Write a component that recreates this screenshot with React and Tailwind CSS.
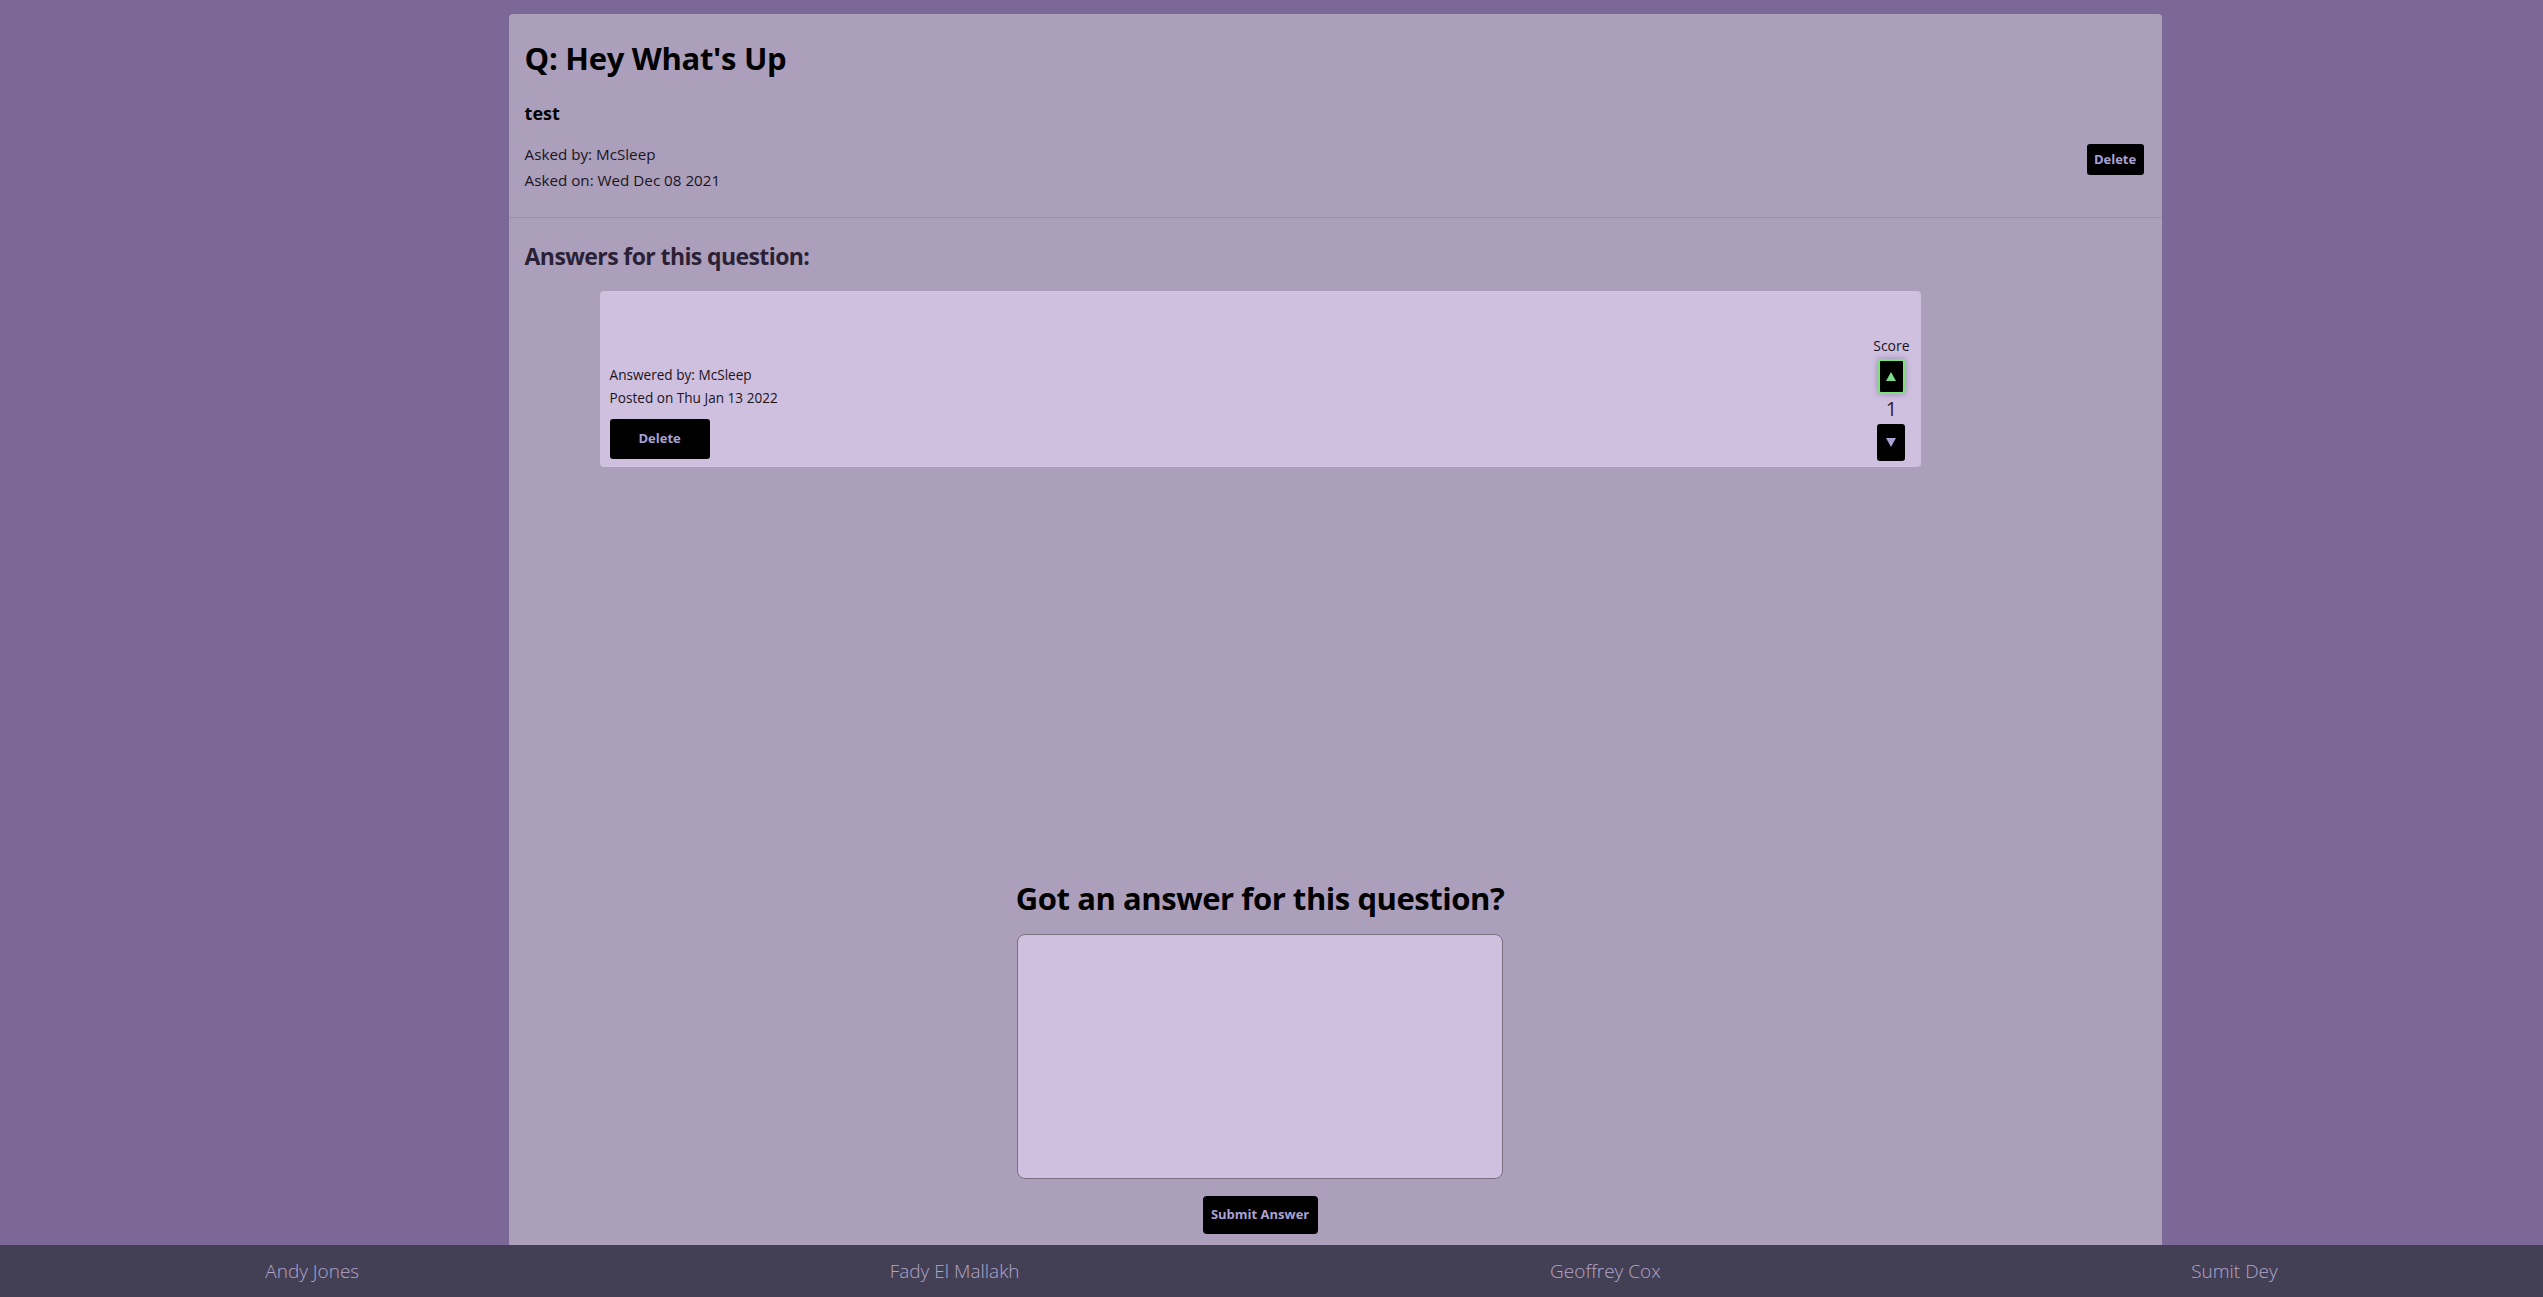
import React from "react";

export default function App() {
  const font = { fontFamily: '"Open Sans", "Noto Sans", sans-serif' };
  return (
    <div className="relative h-[1297px] w-full overflow-hidden bg-[#7b6896] pt-[14px]" style={font}>
      <div className="ml-[20%] h-[1300px] w-[65%] rounded-t-[4px] bg-[#ac9fbb]">
        {/* Question header */}
        <div className="px-4 pt-[25px] pb-[24px]">
          <h1 className="text-[31px] font-bold leading-[38px] tracking-[-0.3px] text-black">Q: Hey What's Up</h1>
          <p className="mt-[25px] text-[18px] font-bold leading-[22px] text-black">test</p>
          <div className="mt-[17px] flex items-start justify-between">
            <div className="text-[15.2px] leading-[26px] text-[#1a1420]">
              <div>Asked by: McSleep</div>
              <div>Asked on: Wed Dec 08 2021</div>
            </div>
            <button className="mt-[3px] mr-[2px] h-[31px] w-[57px] rounded-[3px] bg-black text-[13px] font-bold text-[#a9a2d4]">
              Delete
            </button>
          </div>
        </div>
        <div className="h-px bg-[#999099]" />
        <div className="px-4 pt-[23px]">
          <h2 className="text-[23px] font-bold leading-[30px] tracking-[-0.6px] text-[#2b2137]">Answers for this question:</h2>
        </div>

        <div className="ml-[91px] w-[1321px]">
          {/* Answer card */}
          <div className="mt-[20px] flex h-[176px] items-end justify-between rounded-[4px] bg-[#cfc0e0] pr-[11px] pb-[6px] pl-[10px]">
            <div className="pb-[2px]">
              <div className="text-[13.6px] leading-[23px] text-[#1a1420]">Answered by: McSleep</div>
              <div className="text-[13.6px] leading-[23px] text-[#1a1420]">Posted on Thu Jan 13 2022</div>
              <button className="mt-[10px] h-[40px] w-[100px] rounded-[3px] bg-black text-[13px] font-bold text-[#a9a2d4]">
                Delete
              </button>
            </div>
            <div className="flex flex-col items-center">
              <div className="text-[14px] leading-[18px] text-[#1a1420]">Score</div>
              <button className="mt-[4px] flex h-[35px] w-[27px] items-center justify-center rounded-[3px] border-2 border-[#7fe07f] bg-black shadow-[0_0_6px_rgba(80,60,110,0.45)]">
                <span className="block h-0 w-0 border-x-[5px] border-b-[9px] border-x-transparent border-b-[#7ddc8c]" />
              </button>
              <div className="text-[20px] leading-[30px] text-[#3a1a2a]">1</div>
              <button className="flex h-[37px] w-[28px] items-center justify-center rounded-[3px] bg-black">
                <span className="block h-0 w-0 border-x-[5px] border-t-[9px] border-x-transparent border-t-[#a9a2d4]" />
              </button>
            </div>
          </div>

          {/* Answer form */}
          <div className="mt-[412px] flex flex-col items-center">
            <h2 className="text-[31px] font-bold leading-[38px] tracking-[-0.45px] text-black">Got an answer for this question?</h2>
            <textarea className="mt-[17px] h-[245px] w-[486px] resize-none rounded-[8px] border border-[#7a7080] bg-[#cfc0e0] outline-none" />
            <button className="mt-[17px] h-[38px] w-[115px] rounded-[4px] bg-black text-[13px] font-bold text-[#a9a2d4]">
              Submit Answer
            </button>
          </div>
        </div>
      </div>

      {/* Footer */}
      <footer className="absolute bottom-0 left-0 flex h-[52px] w-full items-center justify-around bg-[#433f54] text-[19px] font-light text-[#b2a5ca]">
        <span>Andy Jones</span>
        <span>Fady El Mallakh</span>
        <span>Geoffrey Cox</span>
        <span>Sumit Dey</span>
      </footer>
    </div>
  );
}
